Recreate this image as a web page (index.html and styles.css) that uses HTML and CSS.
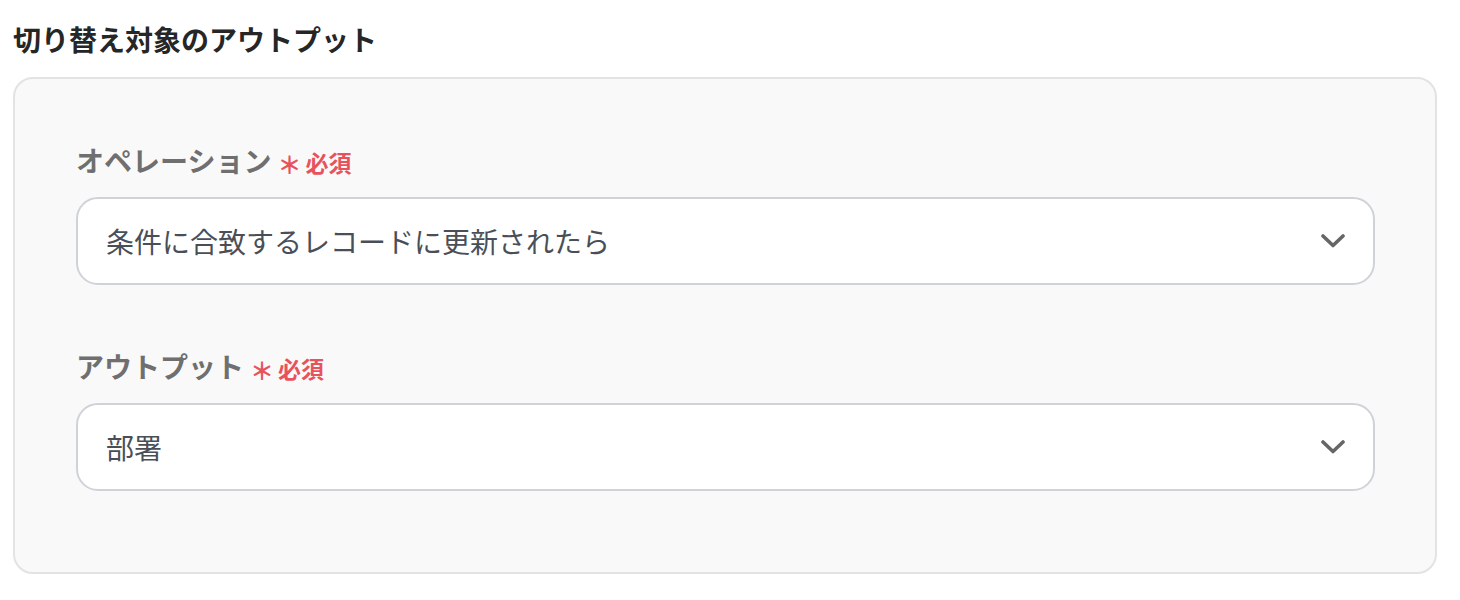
FILE: index.html
```html
<!DOCTYPE html>
<html lang="ja">
<head>
<meta charset="utf-8">
<title>切り替え対象のアウトプット</title>
<link rel="stylesheet" href="styles.css">
</head>
<body>
<div class="page">
  <h2 class="title">切り替え対象のアウトプット</h2>
  <div class="panel">
    <div class="field">
      <div class="label">オペレーション<span class="req"><span class="star">＊</span>必須</span></div>
      <div class="select">
        <span class="value">条件に合致するレコードに更新されたら</span>
        <svg class="chev" width="24" height="14" viewBox="0 0 24 14"><path d="M2 2 L12 11.5 L22 2" fill="none" stroke="#666" stroke-width="3.6" stroke-linecap="round" stroke-linejoin="round"/></svg>
      </div>
    </div>
    <div class="field">
      <div class="label">アウトプット<span class="req"><span class="star">＊</span>必須</span></div>
      <div class="select">
        <span class="value">部署</span>
        <svg class="chev" width="24" height="14" viewBox="0 0 24 14"><path d="M2 2 L12 11.5 L22 2" fill="none" stroke="#666" stroke-width="3.6" stroke-linecap="round" stroke-linejoin="round"/></svg>
      </div>
    </div>
  </div>
</div>
</body>
</html>
```
FILE: styles.css
```css
html, body {
  margin: 0;
  padding: 0;
  background: #ffffff;
}
body {
  font-family: "Noto Sans CJK JP", "Noto Sans", sans-serif;
}
.page {
  padding: 19px 23px 0 13px;
}
.title {
  margin: 0;
  font-size: 28px;
  line-height: 40px;
  font-weight: 700;
  color: #262626;
}
.panel {
  margin-top: 18px;
  width: 1424px;
  box-sizing: border-box;
  background: #f9f9f9;
  border: 2px solid #e3e3e3;
  border-radius: 20px;
  padding: 59px 60px 81px 61px;
  display: flex;
  flex-direction: column;
  gap: 59px;
}
.field {
  display: flex;
  flex-direction: column;
  gap: 15px;
}
.label {
  font-size: 28px;
  line-height: 36px;
  font-weight: 700;
  color: #6f6f6f;
  display: flex;
  align-items: center;
}
.req {
  color: #e8525c;
  font-size: 23px;
  font-weight: 700;
  margin-left: 6px;
  display: inline-flex;
  align-items: center;
  padding-top: 4px;
}
.star {
  font-size: 24px;
  margin-right: 4px;
  padding-top: 4px;
}
.select {
  height: 88px;
  box-sizing: border-box;
  background: #ffffff;
  border: 2px solid #cfd3d8;
  border-radius: 22px;
  display: flex;
  align-items: center;
  justify-content: space-between;
  padding: 0 28px 0 28px;
}
.value {
  font-size: 28px;
  color: #4a4f57;
}
.chev {
  display: block;
}
```
